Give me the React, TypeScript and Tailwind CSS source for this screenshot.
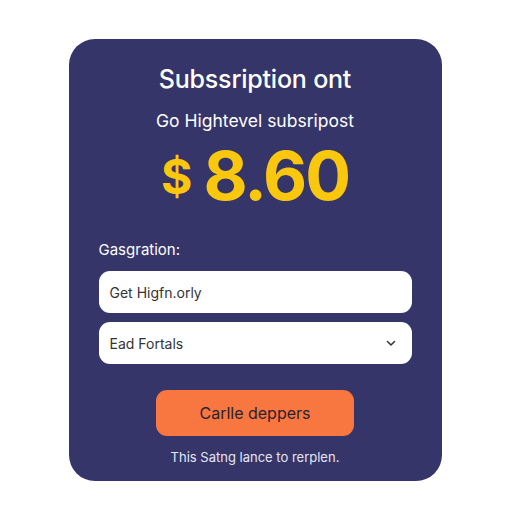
import React from "react";

export default function App() {
  return (
    <div className="w-[512px] h-[512px] bg-white flex justify-center pt-[39px]" style={{ fontFamily: "Inter, 'Open Sans', sans-serif" }}>
      <div className="w-[373px] h-[442px] rounded-[26px] bg-[#35356a] flex flex-col items-center pt-[24px] px-[30px] ml-[-2px]">
        <h1 className="text-white text-[25px] leading-[32px] font-medium tracking-[-0.2px]">Subssription ont</h1>
        <p className="text-white text-[17.5px] leading-[24px] mt-[14px]">Go Hightevel subsripost</p>
        <div className="flex items-center text-[#f9c80e] font-bold mt-[6px] h-[72px]">
          <span className="text-[48px] leading-none mr-[11px] mt-[4px]">$</span>
          <span className="text-[68px] leading-none tracking-[-2px]">8.60</span>
        </div>
        <div className="w-full mt-[29px]">
          <div className="text-white text-[15px] leading-[20px]">Gasgration:</div>
          <div className="mt-[11px] h-[42px] rounded-[11px] bg-white flex items-center px-[11px] text-[14px] text-[#333]">Get Higfn.orly</div>
          <div className="mt-[9px] h-[42px] rounded-[11px] bg-white flex items-center justify-between px-[11px] text-[14px] text-[#333]">
            <span>Ead Fortals</span>
            <svg width="12" height="12" viewBox="0 0 12 12" fill="none" stroke="#333" strokeWidth="1.5" strokeLinecap="round" strokeLinejoin="round" className="mr-[4px]">
              <path d="M2.5 4.5 6 8l3.5-3.5" />
            </svg>
          </div>
        </div>
        <button className="mt-[26px] w-[198px] h-[46px] rounded-[11px] bg-[#f8763f] text-[#2a2230] text-[16px]">Carlle deppers</button>
        <p className="mt-[12px] text-[#e6e6f2] text-[13px]">This Satng lance to rerplen.</p>
      </div>
    </div>
  );
}
